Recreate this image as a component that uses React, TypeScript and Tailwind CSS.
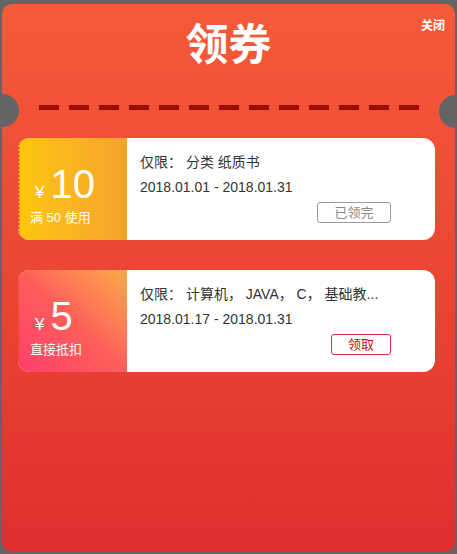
import React from 'react';

interface Coupon {
  amount: string;
  note: string;
  scope: string;
  date: string;
  taken: boolean;
  tone: string;
}

const coupons: Coupon[] = [
  {
    amount: '10',
    note: '满 50 使用',
    scope: '仅限： 分类 纸质书',
    date: '2018.01.01 - 2018.01.31',
    taken: true,
    tone: 'bg-linear-to-r from-[#fdc70a] to-[#f6a22c]',
  },
  {
    amount: '5',
    note: '直接抵扣',
    scope: '仅限： 计算机， JAVA， C， 基础教...',
    date: '2018.01.17 - 2018.01.31',
    taken: false,
    tone: 'bg-linear-to-tr from-[#ff3a6c] via-[#fd5e5a] to-[#fba846]',
  },
];

const CouponCard: React.FC<{ coupon: Coupon }> = ({ coupon }) => {
  return (
    <div className="ml-[16px] flex h-[102px] w-[417px] overflow-hidden rounded-[12px] bg-white">
      <div className={`relative flex w-[109px] shrink-0 flex-col justify-center pl-[12px] pt-[12px] text-white ${coupon.tone}`}>
        <div className="absolute left-0 top-0 bottom-0 w-[3px] bg-[radial-gradient(circle_at_0_50%,#ef4c37_1.4px,transparent_1.9px)] bg-[length:3px_4px]" />
        <div className="flex items-baseline">
          <span className="ml-[5px] text-[17px] leading-none">¥</span>
          <span className="ml-[6px] text-[40px] leading-[40px]">{coupon.amount}</span>
        </div>
        <div className="mt-[6px] text-[13px] leading-[16px]">{coupon.note}</div>
      </div>
      <div className="flex w-[264px] flex-col pl-[13px] pt-[12px] text-[14px] text-[#333]">
        <div className="whitespace-nowrap leading-[24px]">{coupon.scope}</div>
        <div className="mt-[1px] leading-[24px]">{coupon.date}</div>
        <div className="mt-[3px] flex justify-end">
          {coupon.taken ? (
            <button className="h-[21px] w-[74px] rounded-[3px] border border-[#9a9a9a] text-[13px] leading-[19px] text-[#8a8a8a]">
              已领完
            </button>
          ) : (
            <button className="h-[21px] w-[60px] rounded-[3px] border border-[#d0343a] text-[13px] leading-[19px] text-[#b8141c]">
              领取
            </button>
          )}
        </div>
      </div>
    </div>
  );
};

export default function App() {
  return (
    <div className="h-[554px] w-[457px] overflow-hidden bg-[#646464] pt-[4px] pl-[2px] font-['Liberation_Sans','Noto_Sans_CJK_SC',sans-serif]">
      <div className="relative h-[548px] w-[453px] rounded-[10px] bg-linear-to-b from-[#f65a39] to-[#df2e2f] pt-[16px]">
        <button className="absolute right-[10px] top-[15px] text-[12px] font-bold leading-[14px] text-white">关闭</button>
        <h1 className="text-center text-[43px] font-bold leading-[50px] text-white">领券</h1>
        <div className="absolute left-[-16px] top-[90px] h-[33px] w-[33px] rounded-full bg-[#646464]" />
        <div className="absolute right-[-17px] top-[91px] h-[33px] w-[33px] rounded-full bg-[#646464]" />
        <div className="mt-[35px] flex gap-[10px] pl-[37px]">
          {Array.from({ length: 13 }).map((_, i) => (
            <div key={i} className="h-[5px] w-[20px] bg-[#9c0c03]" />
          ))}
        </div>
        <div className="mt-[28px] flex flex-col gap-[30px]">
          {coupons.map((c) => (
            <CouponCard key={c.amount} coupon={c} />
          ))}
        </div>
      </div>
    </div>
  );
}
